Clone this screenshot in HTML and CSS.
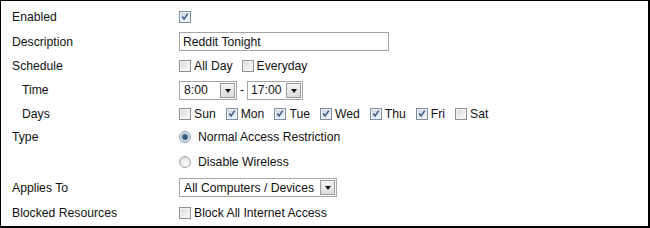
FILE: index.html
```html
<!DOCTYPE html>
<html>
<head>
<meta charset="utf-8">
<link rel="stylesheet" href="styles.css">
</head>
<body>
<div class="panel">
  <div class="row h25">
    <div class="label">Enabled</div>
    <div class="ctl"><span class="cb checked"><svg viewBox="0 0 11 11" width="11" height="11"><path d="M2.5 5.5 L4.5 8.2 L8.6 2.3" fill="none" stroke="#3a5a86" stroke-width="1.6"/></svg></span></div>
  </div>
  <div class="row h25">
    <div class="label">Description</div>
    <div class="ctl"><span class="textbox">Reddit Tonight</span></div>
  </div>
  <div class="row h24">
    <div class="label">Schedule</div>
    <div class="ctl">
      <span class="opt"><span class="cb"></span>All Day</span>
      <span class="opt"><span class="cb"></span>Everyday</span>
    </div>
  </div>
  <div class="row h24">
    <div class="label sub">Time</div>
    <div class="ctl">
      <span class="select w57"><span class="val">8:00</span><span class="btn"><span class="tri"></span></span></span>
      <span class="dash">-</span>
      <span class="select w55"><span class="val">17:00</span><span class="btn"><span class="tri"></span></span></span>
    </div>
  </div>
  <div class="row h23">
    <div class="label sub">Days</div>
    <div class="ctl days">
      <span class="opt"><span class="cb"></span>Sun</span>
      <span class="opt"><span class="cb checked"><svg viewBox="0 0 11 11" width="11" height="11"><path d="M2.5 5.5 L4.5 8.2 L8.6 2.3" fill="none" stroke="#3a5a86" stroke-width="1.6"/></svg></span>Mon</span>
      <span class="opt"><span class="cb checked"><svg viewBox="0 0 11 11" width="11" height="11"><path d="M2.5 5.5 L4.5 8.2 L8.6 2.3" fill="none" stroke="#3a5a86" stroke-width="1.6"/></svg></span>Tue</span>
      <span class="opt"><span class="cb checked"><svg viewBox="0 0 11 11" width="11" height="11"><path d="M2.5 5.5 L4.5 8.2 L8.6 2.3" fill="none" stroke="#3a5a86" stroke-width="1.6"/></svg></span>Wed</span>
      <span class="opt"><span class="cb checked"><svg viewBox="0 0 11 11" width="11" height="11"><path d="M2.5 5.5 L4.5 8.2 L8.6 2.3" fill="none" stroke="#3a5a86" stroke-width="1.6"/></svg></span>Thu</span>
      <span class="opt"><span class="cb checked"><svg viewBox="0 0 11 11" width="11" height="11"><path d="M2.5 5.5 L4.5 8.2 L8.6 2.3" fill="none" stroke="#3a5a86" stroke-width="1.6"/></svg></span>Fri</span>
      <span class="opt"><span class="cb"></span>Sat</span>
    </div>
  </div>
  <div class="row h24">
    <div class="label">Type</div>
    <div class="ctl"><span class="opt radio-opt"><span class="radio on"></span>Normal Access Restriction</span></div>
  </div>
  <div class="row h25">
    <div class="label"></div>
    <div class="ctl"><span class="opt radio-opt"><span class="radio"></span>Disable Wireless</span></div>
  </div>
  <div class="row h27">
    <div class="label">Applies To</div>
    <div class="ctl"><span class="select w157"><span class="val">All Computers / Devices</span><span class="btn"><span class="tri"></span></span></span></div>
  </div>
  <div class="row h24">
    <div class="label">Blocked Resources</div>
    <div class="ctl"><span class="opt"><span class="cb"></span>Block All Internet Access</span></div>
  </div>
</div>
</body>
</html>
```
FILE: styles.css
```css
html, body {
  margin: 0;
  padding: 0;
  background: #fff;
}
.panel {
  box-sizing: border-box;
  width: 650px;
  height: 228px;
  border-top: 1px solid #000;
  border-left: 1px solid #000;
  border-right: 2px solid #000;
  border-bottom: 2px solid #000;
  padding-top: 3px;
  font-family: "Liberation Sans", Arial, sans-serif;
  font-size: 12.2px;
  color: #111;
}
.row {
  display: flex;
  align-items: center;
}
.h23 { height: 23px; }
.h24 { height: 24px; }
.h25 { height: 25px; }
.h27 { height: 27px; }
.label {
  box-sizing: border-box;
  width: 178px;
  padding-left: 11px;
  flex: none;
}
.label.sub { padding-left: 21px; }
.ctl {
  display: flex;
  align-items: center;
  gap: 9px;
}
.days { gap: 10px; }
.opt {
  display: flex;
  align-items: center;
  gap: 3px;
}
.radio-opt { gap: 7px; }
.cb {
  box-sizing: border-box;
  width: 12px;
  height: 12px;
  border: 1px solid #8e8f8f;
  background: linear-gradient(135deg, #d6d6d6 0%, #e8e8e8 45%, #fbfbfb 100%);
  display: inline-flex;
  align-items: center;
  justify-content: center;
  box-shadow: inset 0 0 0 1px #f4f4f4;
}
.cb.checked {
  border-color: #7d8ea3;
  background: linear-gradient(135deg, #c9d3df 0%, #e0e7ef 50%, #f6f8fb 100%);
  box-shadow: inset 0 0 0 1px #eef2f6;
}
.cb svg { display: block; }
.textbox {
  box-sizing: border-box;
  width: 210px;
  height: 19px;
  border: 1px solid #a4a4a4;
  padding-left: 3px;
  display: flex;
  align-items: center;
  background: #fff;
}
.select {
  box-sizing: border-box;
  height: 19px;
  border: 1px solid #a7a7a7;
  display: flex;
  align-items: center;
  justify-content: space-between;
  gap: 2px;
  padding: 1px 1px 1px 4px;
  background: #fff;
}
.w57 { width: 58px; }
.w55 { width: 56px; padding-left: 3px; }
.w157 { width: 158px; }
.select .btn {
  box-sizing: border-box;
  width: 15px;
  height: 15px;
  flex: none;
  border: 1px solid #9a9a9a;
  background: linear-gradient(180deg, #f4f4f4 0%, #dcdcdc 100%);
  display: flex;
  align-items: center;
  justify-content: center;
}
.tri {
  width: 0;
  height: 0;
  border-left: 3.5px solid transparent;
  border-right: 3.5px solid transparent;
  border-top: 4px solid #111;
  margin-top: 1px;
}
.dash {
  margin: 0 -6px;
}
.radio {
  box-sizing: border-box;
  width: 12px;
  height: 12px;
  border-radius: 50%;
  border: 1px solid #a0a4a8;
  background: radial-gradient(circle at 60% 65%, #ffffff 0%, #e6e6e6 55%, #cfcfcf 100%);
  display: inline-block;
}
.radio.on {
  border-color: #8a9aab;
  background: radial-gradient(circle at 50% 50%, #2c4a6b 0%, #3b6286 30%, #8fb0cc 45%, #e4ebf2 60%, #d1d6dc 100%);
}
```
